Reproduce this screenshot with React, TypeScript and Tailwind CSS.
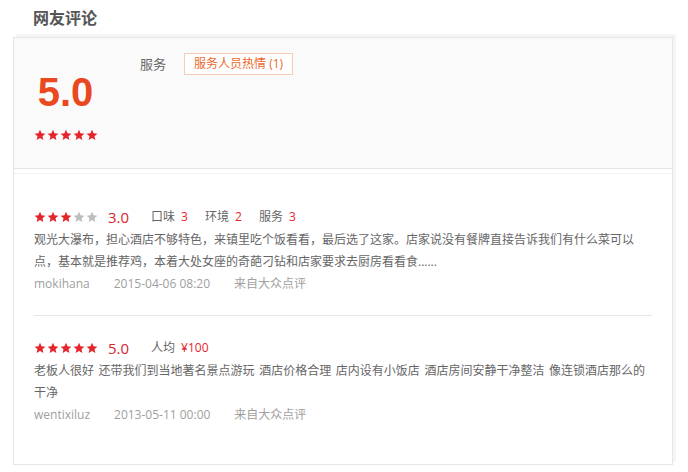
import React from 'react'

const font = "font-['Open_Sans','Noto_Sans_CJK_SC',sans-serif]"

function Stars({ value, size = 12 }: { value: number; size?: number }) {
     return (
          <div className="flex items-center gap-px">
               {[0, 1, 2, 3, 4].map((i) => (
                    <svg key={i} width={size} height={size} viewBox="0 0 24 24">
                         <path
                              d="M12 1.5l3.1 7.1 7.7.7-5.8 5.1 1.7 7.6L12 18l-6.7 4 1.7-7.6-5.8-5.1 7.7-.7z"
                              fill={i < value ? '#e4262c' : '#bdbdbd'}
                         />
                    </svg>
               ))}
          </div>
     )
}

const reviews = [
     {
          stars: 3,
          score: '3.0',
          tags: [
               ['口味', '3'],
               ['环境', '2'],
               ['服务', '3'],
          ],
          text: '观光大瀑布，担心酒店不够特色，来镇里吃个饭看看，最后选了这家。店家说没有餐牌直接告诉我们有什么菜可以点，基本就是推荐鸡，本着大处女座的奇葩刁钻和店家要求去厨房看看食......',
          user: 'mokihana',
          time: '2015-04-06 08:20',
          from: '来自大众点评',
     },
     {
          stars: 5,
          score: '5.0',
          tags: [['人均', '¥100']],
          text: '老板人很好 还带我们到当地著名景点游玩 酒店价格合理 店内设有小饭店 酒店房间安静干净整洁 像连锁酒店那么的干净',
          user: 'wentixiluz',
          time: '2013-05-11 00:00',
          from: '来自大众点评',
     },
]

export default function App() {
     return (
          <div className={`${font} w-[688px] h-[472px] bg-white px-[13px] pt-[5px]`}>
               <h2 className="pl-[20px] text-[16px] leading-[24px] font-bold text-[#555] font-['Noto_Sans_CJK_SC',sans-serif] mb-[8px]">网友评论</h2>
               <div className="w-[660px] border border-[#e6e6e6] shadow-[3px_-3px_0_0_#f5f5f5]">
                    <div className="flex bg-[#fafafa] border-b border-[#e4e4e4] h-[131px] pl-[20px]">
                         <div className="w-[63px] flex flex-col items-center">
                              <div className="mt-[34px] text-[40px] leading-[40px] font-bold text-[#ea481e] font-['Liberation_Sans',sans-serif]">5.0</div>
                              <div className="mt-[17px]">
                                   <Stars value={5} />
                              </div>
                         </div>
                         <div className="ml-[43px] mt-[15px] flex items-start gap-[16px]">
                              <span className="text-[13px] leading-[22px] text-[#666]">服务</span>
                              <span className="ml-[2px] border border-[#f7cdb4] bg-white px-[9px] text-[12px] leading-[20px] text-[#ec6a2c]">服务人员热情 (1)</span>
                         </div>
                    </div>
                    <div className="mt-[4px] border-t border-[#f3f3f3] pt-[11px] pb-[18px]">
                         {reviews.map((r, idx) => (
                              <div
                                   key={idx}
                                   className={`mx-[20px] py-[20px] ${idx === 0 ? 'border-b border-[#e6e6e6]' : ''}`}
                              >
                                   <div className="flex items-center h-[24px]">
                                        <Stars value={r.stars} />
                                        <span className="ml-[10px] text-[15px] text-[#d9262c] leading-none">{r.score}</span>
                                        <div className="ml-[22px] flex items-center gap-[17px] text-[12px]">
                                             {r.tags.map(([k, v]) => (
                                                  <span key={k} className="flex items-center gap-[6px]">
                                                       <span className="text-[#666]">{k}</span>
                                                       <span className="text-[#e4262c]">{v}</span>
                                                  </span>
                                             ))}
                                        </div>
                                   </div>
                                   <p className="text-[12px] leading-[22px] text-[#666] [word-spacing:1.5px]">{r.text}</p>
                                   <div className="flex gap-[24px] text-[12px] leading-[22px] text-[#a0a0a0]">
                                        <span>{r.user}</span>
                                        <span>{r.time}</span>
                                        <span>{r.from}</span>
                                   </div>
                              </div>
                         ))}
                    </div>
               </div>
          </div>
     )
}
